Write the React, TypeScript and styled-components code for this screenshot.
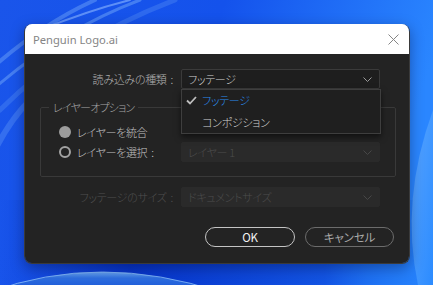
import React from 'react';
import styled, { createGlobalStyle } from 'styled-components';

const GlobalStyle = createGlobalStyle`
  html, body {
    margin: 0;
    padding: 0;
    background: #0b3bd0;
  }
  body {
    font-family: "Noto Sans CJK JP", "Noto Sans", sans-serif;
  }
`;

const Desktop = styled.div`
  position: relative;
  width: 433px;
  height: 285px;
  overflow: hidden;
  padding: 24px 0 0 24px;
  box-sizing: border-box;
`;

const Wallpaper = styled.svg`
  position: absolute;
  left: 0;
  top: 0;
  z-index: 0;
`;

const Dialog = styled.div`
  position: relative;
  z-index: 1;
  width: 386px;
  height: 240px;
  border-radius: 8px;
  overflow: hidden;
  display: flex;
  flex-direction: column;
  box-shadow: 0 4px 14px rgba(0, 0, 30, 0.35);
  border: 1px solid #3a3a3a;
  border-top: none;
  box-sizing: border-box;
`;

const TitleBar = styled.div`
  height: 30px;
  background: #ffffff;
  display: flex;
  align-items: center;
  justify-content: space-between;
  padding: 0 10px 0 8px;
  flex-shrink: 0;
`;

const Title = styled.span`
  font-family: "Noto Sans", sans-serif;
  font-size: 11.2px;
  color: #858585;
`;

const Body = styled.div`
  flex: 1;
  background: #232323;
  padding: 15px 15px 15px 0;
  display: flex;
  flex-direction: column;
  font-feature-settings: "palt";
  font-size: 11px;
  letter-spacing: -0.3px;
  font-weight: 300;
`;

const Row = styled.div<{ $top?: number }>`
  display: flex;
  align-items: center;
  height: 20px;
  margin-top: ${(p) => p.$top ?? 0}px;
`;

const FieldLabel = styled.span<{ $disabled?: boolean }>`
  width: 156px;
  box-sizing: border-box;
  padding-right: 8px;
  text-align: right;
  color: ${(p) => (p.$disabled ? '#4f4f4f' : '#b4b4b4')};
  white-space: nowrap;
`;

const Colon = styled.span`
  margin-left: 4px;
`;

const SelectWrap = styled.div`
  position: relative;
`;

const Select = styled.div<{ $disabled?: boolean }>`
  width: 199px;
  height: 20px;
  box-sizing: border-box;
  display: flex;
  align-items: center;
  justify-content: space-between;
  padding: 0 7px 0 6px;
  border-radius: 2px;
  background: ${(p) => (p.$disabled ? '#2a2a2a' : '#1e1e1e')};
  border: 1px solid ${(p) => (p.$disabled ? '#2a2a2a' : '#3a3a3a')};
  color: ${(p) => (p.$disabled ? '#4c4c4c' : '#d2d2d2')};
`;

const Menu = styled.div`
  position: absolute;
  left: 0;
  top: 20px;
  width: 200px;
  box-sizing: border-box;
  background: #1f1f1f;
  border: 1px solid #3e3e3e;
  box-shadow: 0 3px 6px rgba(0, 0, 0, 0.55);
  z-index: 5;
`;

const MenuItem = styled.div<{ $active?: boolean }>`
  position: relative;
  height: 22px;
  display: flex;
  align-items: center;
  padding-left: 20px;
  margin-top: ${(p) => (p.$active ? -1 : 0)}px;
  color: ${(p) => (p.$active ? '#2b8ef0' : '#d0d0d0')};
`;

const CheckMark = styled.svg`
  position: absolute;
  left: 4px;
  top: 7px;
`;

const Group = styled.fieldset`
  margin: 10px 0 0 15px;
  width: 356px;
  box-sizing: border-box;
  border: 1px solid #393939;
  border-radius: 2px;
  padding: 0 0 14px 8px;
  min-inline-size: 0;
`;

const Legend = styled.legend`
  padding: 0 4px;
  line-height: 16px;
  color: #a4a4a4;
  letter-spacing: -0.8px;
`;

const RadioRow = styled.div<{ $top?: number }>`
  display: flex;
  align-items: center;
  height: 20px;
  padding-left: 10px;
  margin-top: ${(p) => p.$top ?? 0}px;
`;

const RadioLabel = styled.div`
  width: 122px;
  display: flex;
  align-items: center;
  gap: 6px;
  color: #c2c2c2;
  white-space: nowrap;
`;

const Radio = styled.span<{ $checked?: boolean }>`
  width: 12px;
  height: 12px;
  border-radius: 50%;
  box-sizing: border-box;
  flex-shrink: 0;
  background: ${(p) => (p.$checked ? '#9d9d9d' : 'transparent')};
  border: ${(p) => (p.$checked ? 'none' : '2px solid #a3a3a3')};
`;

const Buttons = styled.div`
  display: flex;
  justify-content: flex-end;
  gap: 10px;
  margin-top: 20px;
`;

const PillButton = styled.button<{ $primary?: boolean; $w: number }>`
  width: ${(p) => p.$w}px;
  height: 20px;
  border-radius: 10px;
  background: transparent;
  font-family: "Noto Sans CJK JP", "Noto Sans", sans-serif;
  font-feature-settings: "palt";
  font-size: 11.5px;
  letter-spacing: -0.2px;
  padding: 0;
  border: 1.5px solid ${(p) => (p.$primary ? '#c4c4c4' : '#6c6c6c')};
  color: ${(p) => (p.$primary ? '#f2f2f2' : '#a8a8a8')};
`;

const Chevron = ({ color }: { color: string }) => (
  <svg width="9" height="5" viewBox="0 0 9 5">
    <polyline points="0.5,0.5 4.5,4.5 8.5,0.5" fill="none" stroke={color} strokeWidth="1" />
  </svg>
);

const Background = () => (
  <Wallpaper width="433" height="285" viewBox="0 0 433 285">
    <defs>
      <linearGradient id="bg" x1="0" y1="0" x2="1" y2="0.2">
        <stop offset="0" stopColor="#1a55ea" />
        <stop offset="0.5" stopColor="#1452ec" />
        <stop offset="1" stopColor="#2a86ff" />
      </linearGradient>
      <linearGradient id="low" x1="0" y1="0" x2="1" y2="0">
        <stop offset="0" stopColor="#0a33c2" stopOpacity="0" />
        <stop offset="0.3" stopColor="#0530c4" stopOpacity="0.85" />
        <stop offset="0.75" stopColor="#0a42d8" stopOpacity="0.7" />
        <stop offset="1" stopColor="#1a78f4" stopOpacity="0.2" />
      </linearGradient>
      <linearGradient id="arc" x1="0" y1="0" x2="0" y2="1">
        <stop offset="0" stopColor="#6aa6f2" />
        <stop offset="0.3" stopColor="#2f6fe0" />
        <stop offset="1" stopColor="#1450d4" />
      </linearGradient>
      <linearGradient id="right" x1="0" y1="0" x2="1" y2="1">
        <stop offset="0" stopColor="#5ea8ff" />
        <stop offset="1" stopColor="#2c8cff" />
      </linearGradient>
    </defs>
    <rect width="433" height="285" fill="url(#bg)" />
    <rect y="200" width="433" height="85" fill="url(#low)" />
    <g fill="none" strokeLinecap="round">
      <path d="M-10,70 Q40,25 95,0" stroke="#5b92f5" strokeWidth="4" opacity="0.6" />
      <path d="M-10,92 Q60,30 140,0" stroke="#6aa0f8" strokeWidth="3" opacity="0.55" />
      <path d="M0,110 Q70,40 175,0" stroke="#4b86f2" strokeWidth="5" opacity="0.45" />
      <path d="M40,30 Q90,10 130,0" stroke="#8cb8ff" strokeWidth="2" opacity="0.6" />
      <path d="M-5,150 Q10,120 30,100" stroke="#4f88f4" strokeWidth="6" opacity="0.5" />
    </g>
    <path d="M433,110 Q400,200 418,285 L433,285 Z" fill="url(#right)" opacity="0.9" />
    <path d="M-10,292 Q100,252 220,292 Z" fill="url(#arc)" />
    <path d="M-10,292 Q100,252 220,292" fill="none" stroke="#8cc0fa" strokeWidth="1" opacity="0.8" />
  </Wallpaper>
);

const App = () => {
  return (
    <>
      <GlobalStyle />
      <Desktop>
        <Background />
        <Dialog>
          <TitleBar>
            <Title>Penguin Logo.ai</Title>
            <svg width="11" height="11" viewBox="0 0 11 11">
              <path d="M0.5,0.5 L10.5,10.5 M10.5,0.5 L0.5,10.5" stroke="#858585" strokeWidth="1" />
            </svg>
          </TitleBar>
          <Body>
            <Row>
              <FieldLabel>
                読み込みの種類<Colon>:</Colon>
              </FieldLabel>
              <SelectWrap>
                <Select>
                  <span>フッテージ</span>
                  <Chevron color="#9a9a9a" />
                </Select>
                <Menu>
                  <MenuItem $active>
                    <CheckMark width="11" height="9" viewBox="0 0 11 9">
                      <polyline points="1,4.5 4,7.5 10,1" fill="none" stroke="#bdbdbd" strokeWidth="1.8" />
                    </CheckMark>
                    フッテージ
                  </MenuItem>
                  <MenuItem>コンポジション</MenuItem>
                </Menu>
              </SelectWrap>
            </Row>

            <Group>
              <Legend>レイヤーオプション</Legend>
              <RadioRow $top={7}>
                <RadioLabel>
                  <Radio $checked />
                  レイヤーを統合
                </RadioLabel>
              </RadioRow>
              <RadioRow>
                <RadioLabel>
                  <Radio />
                  <span>
                    レイヤーを選択<Colon>:</Colon>
                  </span>
                </RadioLabel>
                <Select $disabled>
                  <span>レイヤー 1</span>
                  <Chevron color="#474747" />
                </Select>
              </RadioRow>
            </Group>

            <Row $top={10}>
              <FieldLabel $disabled>
                フッテージのサイズ<Colon>:</Colon>
              </FieldLabel>
              <Select $disabled>
                <span>ドキュメントサイズ</span>
                <Chevron color="#474747" />
              </Select>
            </Row>

            <Buttons>
              <PillButton $primary $w={90}>OK</PillButton>
              <PillButton $w={89}>キャンセル</PillButton>
            </Buttons>
          </Body>
        </Dialog>
      </Desktop>
    </>
  );
};

export default App;
